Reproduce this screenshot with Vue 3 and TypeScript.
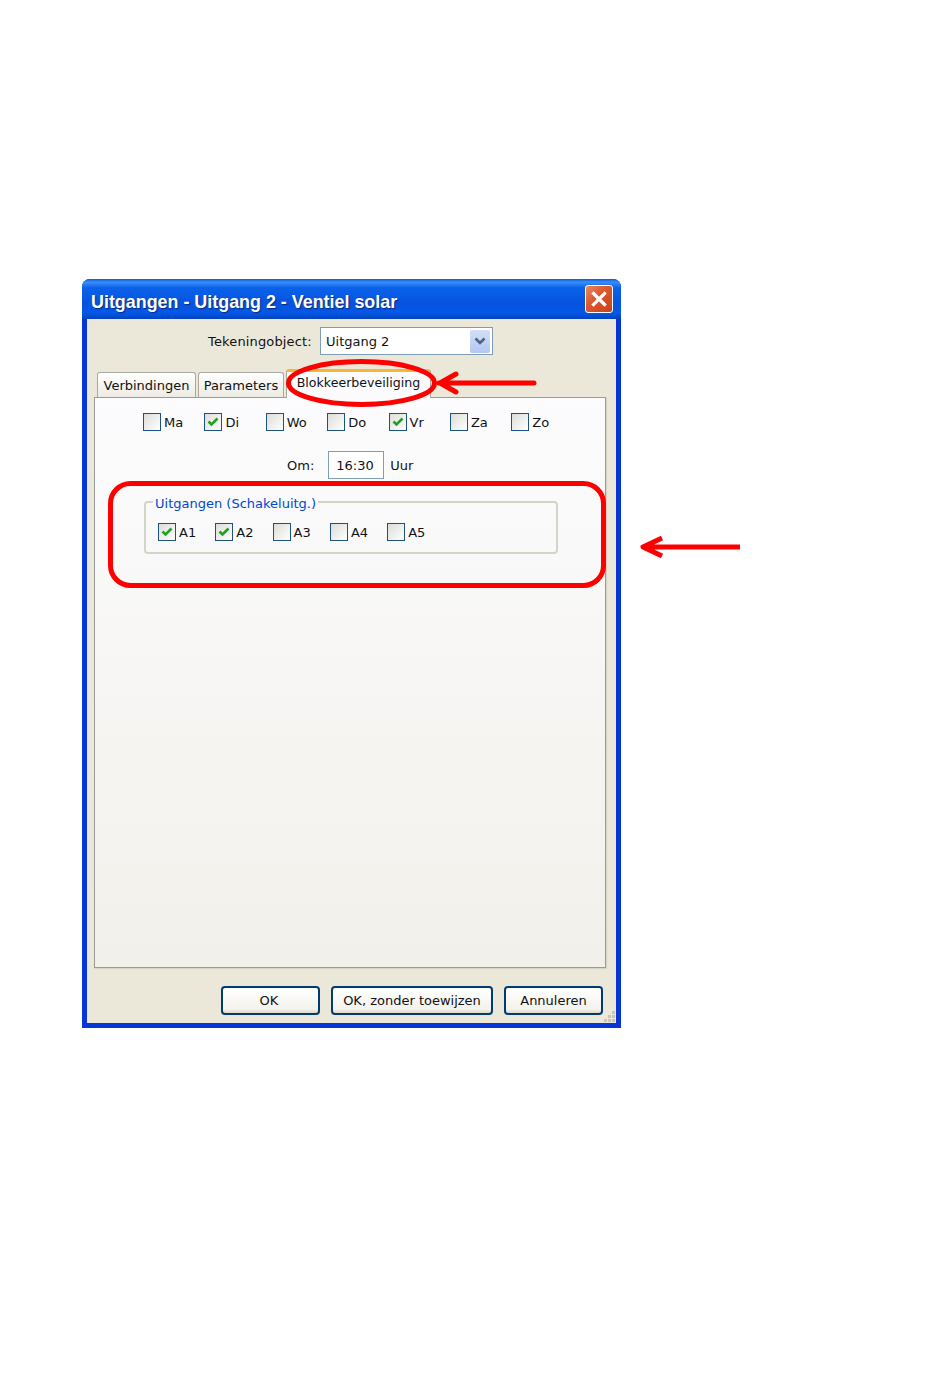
<script setup lang="ts">
// dagen en uitgangen van het dialoog
const days = [
  { label: "Ma", on: false },
  { label: "Di", on: true },
  { label: "Wo", on: false },
  { label: "Do", on: false },
  { label: "Vr", on: true },
  { label: "Za", on: false },
  { label: "Zo", on: false },
];

const outputs = [
  { label: "A1", on: true },
  { label: "A2", on: true },
  { label: "A3", on: false },
  { label: "A4", on: false },
  { label: "A5", on: false },
];

const gripDots = [
  [8, 0],
  [4, 4],
  [8, 4],
  [0, 8],
  [4, 8],
  [8, 8],
];
</script>

<template>
  <div class="page">
    <div class="window">
      <div class="titlebar">
        <span class="title">Uitgangen - Uitgang 2 - Ventiel solar</span>
        <button class="close">
          <svg width="18" height="18" viewBox="0 0 18 18">
            <path d="M3.5 3.5 L14.5 14.5 M14.5 3.5 L3.5 14.5" stroke="#fff" stroke-width="3.2" stroke-linecap="square" />
          </svg>
        </button>
      </div>

      <div class="client">
        <div class="object-row">
          <span class="object-label">Tekeningobject:</span>
          <div class="select">
            <span>Uitgang 2</span>
            <span class="drop">
              <svg width="12" height="10" viewBox="0 0 12 10">
                <path d="M1.5 2.5 L6 7 L10.5 2.5" fill="none" stroke="#4d6185" stroke-width="2.6" />
              </svg>
            </span>
          </div>
        </div>

        <div class="tabs">
          <div class="tab first">Verbindingen</div>
          <div class="tab second">Parameters</div>
          <div class="tab active">Blokkeerbeveiliging</div>
        </div>

        <div class="panel">
          <div class="days">
            <label v-for="d in days" :key="d.label" class="check">
              <span class="box">
                <svg v-if="d.on" width="12" height="10" viewBox="0 0 12 10">
                  <path d="M1.5 4.5 L4.5 7.5 L10.5 1.5" fill="none" stroke="#21a121" stroke-width="2.6" />
                </svg>
              </span>
              <span>{{ d.label }}</span>
            </label>
          </div>

          <div class="time-row">
            <span>Om:</span>
            <div class="time-input">16:30</div>
            <span>Uur</span>
          </div>

          <fieldset class="group">
            <legend>Uitgangen (Schakeluitg.)</legend>
            <div class="outputs">
              <label v-for="o in outputs" :key="o.label" class="check">
                <span class="box">
                  <svg v-if="o.on" width="12" height="10" viewBox="0 0 12 10">
                    <path d="M1.5 4.5 L4.5 7.5 L10.5 1.5" fill="none" stroke="#21a121" stroke-width="2.6" />
                  </svg>
                </span>
                <span>{{ o.label }}</span>
              </label>
            </div>
          </fieldset>
        </div>

        <div class="footer">
          <button class="btn ok">OK</button>
          <button class="btn no-assign">OK, zonder toewijzen</button>
          <button class="btn cancel">Annuleren</button>
        </div>

        <svg class="grip" width="12" height="12" viewBox="0 0 12 12">
          <rect v-for="(p, i) in gripDots" :key="i" :x="p[0]" :y="p[1]" width="3" height="3" fill="#c9c6b6" />
        </svg>
      </div>
    </div>

    <!-- rode markeringen over de schermafbeelding -->
    <svg class="marks" width="950" height="1397" viewBox="0 0 950 1397">
      <g fill="none" stroke="#fe0000" stroke-width="5">
        <ellipse cx="361.5" cy="383" rx="73" ry="21.5" />
        <rect x="110.5" y="483.5" width="493" height="102" rx="20" />
        <path d="M534 383 H439 M456 374 L440 383 L456 392" stroke-linecap="round" stroke-linejoin="round" />
        <path d="M740 547 H642 M662 538 L643 547 L662 556" stroke-linejoin="round" />
      </g>
    </svg>
  </div>
</template>

<style scoped>
.page {
  position: relative;
  width: 950px;
  height: 1397px;
  padding: 279px 0 0 82px;
  box-sizing: border-box;
  background: #fff;
  overflow: hidden;
  font-family: "DejaVu Sans", "Liberation Sans", sans-serif;
  font-size: 13px;
  color: #111;
}

.window {
  width: 539px;
  height: 749px;
  display: flex;
  flex-direction: column;
  background: #0636d6;
  border-radius: 8px 8px 0 0;
}

.titlebar {
  height: 40px;
  flex: none;
  display: flex;
  align-items: center;
  justify-content: space-between;
  padding: 0 8px 0 9px;
  border-radius: 8px 8px 0 0;
  background: linear-gradient(180deg, #0a5be0 0%, #3a8dfa 8%, #0a62ea 22%, #0653de 60%, #0558e6 85%, #0342bd 100%);
}

.title {
  color: #fff;
  font-family: "Liberation Sans", sans-serif;
  font-weight: 700;
  font-size: 17.9px;
  padding-top: 6px;
  text-shadow: 1px 1px 1px #0a2a80;
}

.close {
  width: 28px;
  height: 28px;
  padding: 0;
  display: flex;
  align-items: center;
  justify-content: center;
  border: 1px solid #fff;
  border-radius: 3px;
  background: linear-gradient(135deg, #e88a68 0%, #dd5a2e 40%, #c9401a 100%);
}

.client {
  position: relative;
  flex: 1;
  margin: 0 5px 5px;
  background: #ebe8d9;
  display: flex;
  flex-direction: column;
  min-height: 0;
}

.object-row {
  height: 28px;
  margin-top: 8px;
  display: flex;
  align-items: center;
  padding-left: 121px;
  gap: 8px;
}

.object-label {
  width: 104px;
  white-space: nowrap;
  letter-spacing: 0.15px;
}

.select {
  width: 173px;
  height: 28px;
  box-sizing: border-box;
  border: 1px solid #7f9db9;
  background: #fff;
  display: flex;
  align-items: center;
  justify-content: space-between;
  padding: 0 2px 0 5px;
}

.drop {
  width: 20px;
  height: 23px;
  display: flex;
  align-items: center;
  justify-content: center;
  background: linear-gradient(180deg, #d3dff8, #b4c7f2);
  border-radius: 2px;
}

.tabs {
  height: 25px;
  margin-top: 17px;
  margin-left: 10px;
  display: flex;
  align-items: flex-end;
  gap: 2px;
  position: relative;
  z-index: 1;
}

.tab {
  height: 25px;
  box-sizing: border-box;
  display: flex;
  align-items: center;
  justify-content: center;
  border: 1px solid #a9a99f;
  border-bottom: none;
  border-radius: 3px 3px 0 0;
  background: linear-gradient(180deg, #fff, #ecebe4);
  white-space: nowrap;
}

.first {
  width: 99px;
}

.second {
  width: 86px;
}

.active {
  width: 145px;
  height: 29px;
  margin-bottom: -1px;
  border-top: 3px solid #f8b636;
  background: #fcfcfe;
  padding: 0 0 5px;
  font-size: 12.6px;
}

.panel {
  width: 512px;
  height: 571px;
  margin-left: 7px;
  flex: none;
  box-sizing: border-box;
  border: 1px solid #999b96;
  box-shadow: 1px 1px 1px #d8d5c5;
  background: linear-gradient(180deg, #fcfcfe 0%, #f2f0ea 100%);
  display: flex;
  flex-direction: column;
}

.days {
  margin: 15px 0 0 48px;
  display: grid;
  grid-template-columns: repeat(7, 61.4px);
}

.check {
  display: flex;
  align-items: center;
  gap: 3px;
  height: 18px;
}

.box {
  width: 18px;
  height: 18px;
  flex: none;
  box-sizing: border-box;
  border: 1.5px solid #1c5180;
  background: linear-gradient(135deg, #dcdcd7, #fff);
  display: flex;
  align-items: center;
  justify-content: center;
}

.time-row {
  margin: 20px 0 0 192px;
  height: 28px;
  display: flex;
  align-items: center;
}

.time-input {
  width: 56px;
  height: 28px;
  box-sizing: border-box;
  margin: 0 6px 0 14px;
  padding-left: 7px;
  border: 1px solid #7f9db9;
  background: #fff;
  display: flex;
  align-items: center;
}

.group {
  width: 414px;
  height: 61px;
  box-sizing: border-box;
  margin: 14px 0 0 49px;
  padding: 0;
  border: 2px solid #d4d4c6;
  border-radius: 4px;
  min-width: 0;
}

.group legend {
  margin-left: 7px;
  padding: 3px 2px 0;
  color: #0046d5;
  font-size: 13px;
}

.outputs {
  margin: 12px 0 0 12px;
  display: grid;
  grid-template-columns: repeat(5, 57.3px);
}

.footer {
  margin-top: 18px;
  margin-right: 13px;
  display: flex;
  justify-content: flex-end;
  gap: 11px;
}

.btn {
  height: 29px;
  padding: 0;
  box-sizing: border-box;
  font: inherit;
  color: #111;
  border: 2px solid #003c74;
  border-radius: 4px;
  background: linear-gradient(180deg, #fff 0%, #f3f2ec 85%, #dcd8c9 100%);
}

.ok {
  width: 99px;
  padding-right: 3px;
}

.no-assign {
  width: 162px;
}

.cancel {
  width: 99px;
}

.grip {
  position: absolute;
  right: 0;
  bottom: 0;
}

.marks {
  position: absolute;
  top: 0;
  left: 0;
  z-index: 2;
  pointer-events: none;
}
</style>
